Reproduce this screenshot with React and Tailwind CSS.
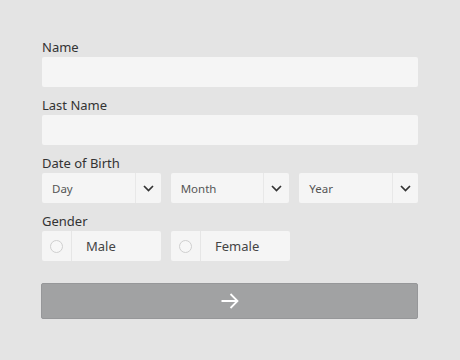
import React from "react";

const Chevron = () => (
  <svg width="11" height="7" viewBox="0 0 11 7" fill="none">
    <path d="M1 1l4.5 4.5L10 1" stroke="#333" strokeWidth="1.7" />
  </svg>
);

const Select = ({ label }) => (
  <div className="flex h-[30px] flex-1 rounded-[2px] bg-[#f5f5f5]">
    <div className="flex flex-1 items-center pl-[10px] pt-[2px] text-[11.5px] text-[#555]">
      {label}
    </div>
    <div className="flex w-[26px] items-center justify-center border-l border-[#e8e8e8]">
      <Chevron />
    </div>
  </div>
);

const Radio = ({ label }) => (
  <label className="flex h-[30px] w-[119px] rounded-[2px] bg-[#f5f5f5]">
    <div className="flex w-[30px] items-center justify-center border-r border-[#e6e6e6]">
      <span className="h-[13px] w-[13px] rounded-full border border-[#cfcfcf] bg-[#f7f7f7]" />
    </div>
    <div className="flex flex-1 items-center pl-[14px] pt-[2px] text-[13px] text-[#444]">
      {label}
    </div>
  </label>
);

const Field = ({ label, children }) => (
  <div className="flex flex-col">
    <span className="h-[18px] text-[13px] leading-[16px] text-[#333]">{label}</span>
    {children}
  </div>
);

export default function App() {
  return (
    <div
      className="h-[360px] w-[460px] bg-[#e4e4e4] pl-[42px] pt-[39px]"
      style={{ fontFamily: '"Noto Sans", "Open Sans", sans-serif' }}
    >
      <div className="flex w-[376px] flex-col gap-[10px]">
        <Field label="Name">
          <div className="h-[30px] rounded-[2px] bg-[#f5f5f5]" />
        </Field>
        <Field label="Last Name">
          <div className="h-[30px] rounded-[2px] bg-[#f5f5f5]" />
        </Field>
        <Field label="Date of Birth">
          <div className="flex gap-[10px]">
            <Select label="Day" />
            <Select label="Month" />
            <Select label="Year" />
          </div>
        </Field>
        <Field label="Gender">
          <div className="flex gap-[10px]">
            <Radio label="Male" />
            <Radio label="Female" />
          </div>
        </Field>
      </div>
      <button className="mt-[22px] -ml-px flex h-[36px] w-[377px] items-center justify-center rounded-[2px] border border-[#969799] bg-[#a1a2a3]">
        <svg width="20" height="18" viewBox="0 0 20 18" fill="none">
          <path d="M1.5 9h16M10.5 2L17.5 9l-7 7" stroke="#fff" strokeWidth="1.8" />
        </svg>
      </button>
    </div>
  );
}
